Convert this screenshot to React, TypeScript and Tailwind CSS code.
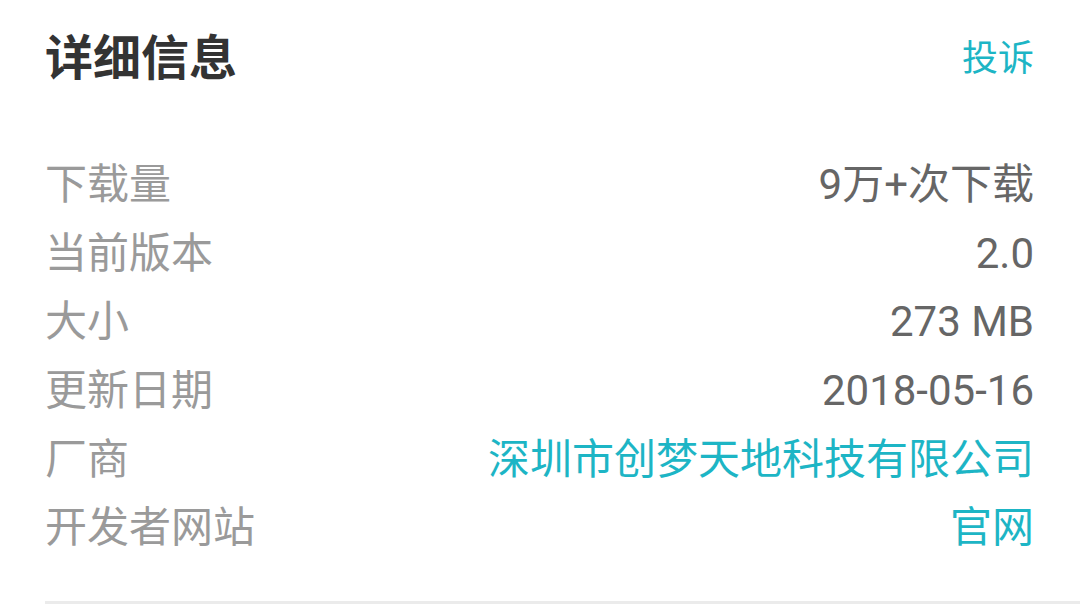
import React from "react";

const rows: { label: string; value: string; link?: boolean }[] = [
  { label: "下载量", value: "9万+次下载" },
  { label: "当前版本", value: "2.0" },
  { label: "大小", value: "273 MB" },
  { label: "更新日期", value: "2018-05-16" },
  { label: "厂商", value: "深圳市创梦天地科技有限公司", link: true },
  { label: "开发者网站", value: "官网", link: true },
];

export default function App() {
  return (
    <div
      className="w-[1080px] h-[611px] bg-white overflow-hidden"
      style={{ fontFamily: "Roboto, 'Noto Sans CJK SC', sans-serif" }}
    >
      <div className="pl-[45px] pr-[46px]">
        <div className="h-[118px] flex items-center justify-between">
          <h2 className="text-[48px] leading-none font-bold text-[#333333]">详细信息</h2>
          <button className="text-[36px] leading-none text-[#1db5c5]">投诉</button>
        </div>
        <div className="mt-[33px]">
          {rows.map((r) => (
            <div key={r.label} className="h-[68.6px] flex items-center justify-between">
              <span className="text-[42px] leading-none text-[#9a9a9a]">{r.label}</span>
              <span
                className={
                  "text-[42px] leading-none " + (r.link ? "text-[#1db5c5]" : "text-[#666666]")
                }
              >
                {r.value}
              </span>
            </div>
          ))}
        </div>
      </div>
      <div className="ml-[45px] mt-[38px] h-[3px] bg-[#ebebeb]" />
    </div>
  );
}
